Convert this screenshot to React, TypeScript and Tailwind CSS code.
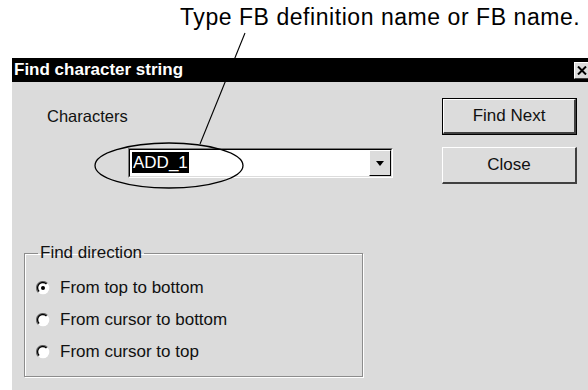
import React from 'react'

const font = { fontFamily: '"Liberation Sans", Arial, sans-serif' }

const Radio: React.FC<{ checked?: boolean }> = ({ checked }) => (
  <svg width="14" height="14" viewBox="0 0 14 14" className="shrink-0">
    <circle cx="7" cy="7" r="6.3" fill="#fff" />
    <path d="M2.3 11.4 A6.2 6.2 0 0 1 11.4 2.3" fill="none" stroke="#6e6e6e" strokeWidth="1.2" />
    <path d="M3.1 10.5 A5 5 0 0 1 10.5 3.1" fill="none" stroke="#000" strokeWidth="1.4" />
    {checked && <circle cx="7" cy="7" r="2" fill="#000" />}
  </svg>
)

const RadioRow: React.FC<{ label: string; checked?: boolean }> = ({ label, checked }) => (
  <div className="flex items-center gap-[10px] h-[32px] text-[17px] text-[#111] leading-[20px]">
    <Radio checked={checked} />
    <span>{label}</span>
  </div>
)

export default function App() {
  return (
    <div className="relative w-[588px] h-[390px] bg-white overflow-hidden flex flex-col" style={font}>
      {/* Callout text */}
      <div className="h-[58px] pl-[180px] pt-[4px] text-[23px] leading-[26px] text-black tracking-[0.55px] whitespace-nowrap">
        Type FB definition name or FB name.
      </div>

      {/* Dialog */}
      <div className="ml-[12px] w-[578px] flex-1 bg-[#dbdbdb] flex flex-col">
        <div className="h-[24px] bg-black flex items-center justify-between pl-[2px] pr-[0px]">
          <span className="text-white font-bold text-[17px] leading-[20px]">Find character string</span>
          <div className="w-[16px] h-[17px] bg-[#dcdcdc] border-t border-l border-white border-r border-b border-r-[#404040] border-b-[#404040] flex items-center justify-center">
            <svg width="10" height="9" viewBox="0 0 10 9">
              <path d="M1 0.5 L9 8.5 M9 0.5 L1 8.5" stroke="#000" strokeWidth="2" />
            </svg>
          </div>
        </div>

        <div className="flex flex-1">
          {/* Left column */}
          <div className="w-[430px] pt-[24px]">
            <div className="pl-[35px] h-[20px] text-[16.5px] leading-[20px] text-[#111]">Characters</div>

            <div className="ml-[116px] mt-[22px] w-[265px] h-[30px] flex border-t border-l border-[#7a7a7a] border-r border-b border-r-white border-b-white">
              <div className="flex-1 flex bg-white border-t border-l border-black border-r border-b border-r-[#dcdcdc] border-b-[#dcdcdc]">
                <div className="flex-1 pl-[2px] pt-[1px]">
                  <span className="bg-black text-white text-[17px] leading-[21px] px-[1px] inline-block">ADD_1</span>
                </div>
                <div className="w-[22px] bg-[#dcdcdc] border-t border-l border-white border-r border-b border-r-black border-b-black flex items-center justify-center">
                  <svg width="8" height="5" viewBox="0 0 8 5">
                    <path d="M0 0 H8 L4 5 Z" fill="#000" />
                  </svg>
                </div>
              </div>
            </div>

            <fieldset className="ml-[12px] mt-[65px] w-[339px] h-[134px] border border-[#8c8c8c] shadow-[1px_1px_0_#fff,inset_1px_1px_0_#fff] pl-[11px]">
              <legend className="ml-[2px] px-[2px] text-[17px] leading-[20px] text-[#111]">Find direction</legend>
              <div className="mt-[9px] flex flex-col">
                <RadioRow label="From top to bottom" checked />
                <RadioRow label="From cursor to bottom" />
                <RadioRow label="From cursor to top" />
              </div>
            </fieldset>
          </div>

          {/* Buttons */}
          <div className="pt-[16px] flex flex-col gap-[12px]">
            <button className="w-[135px] h-[37px] border border-black bg-[#dcdcdc] text-[17px] text-[#111]">
              <div className="w-full h-full border-t border-l border-white border-r-2 border-b-2 border-r-[#404040] border-b-[#404040] flex items-center justify-center">
                Find Next
              </div>
            </button>
            <button className="w-[135px] h-[37px] bg-[#dcdcdc] text-[17px] text-[#111] border-t border-l border-white border-r-2 border-b-2 border-r-[#404040] border-b-[#404040] flex items-center justify-center">
              Close
            </button>
          </div>
        </div>
      </div>

      {/* Callout leader and ellipse */}
      <svg className="absolute inset-0 pointer-events-none" width="588" height="390">
        <line x1="245" y1="33" x2="200" y2="144" stroke="#000" strokeWidth="1.1" />
        <ellipse cx="169" cy="165.5" rx="74" ry="22.5" fill="none" stroke="#000" strokeWidth="1.3" />
      </svg>
    </div>
  )
}
